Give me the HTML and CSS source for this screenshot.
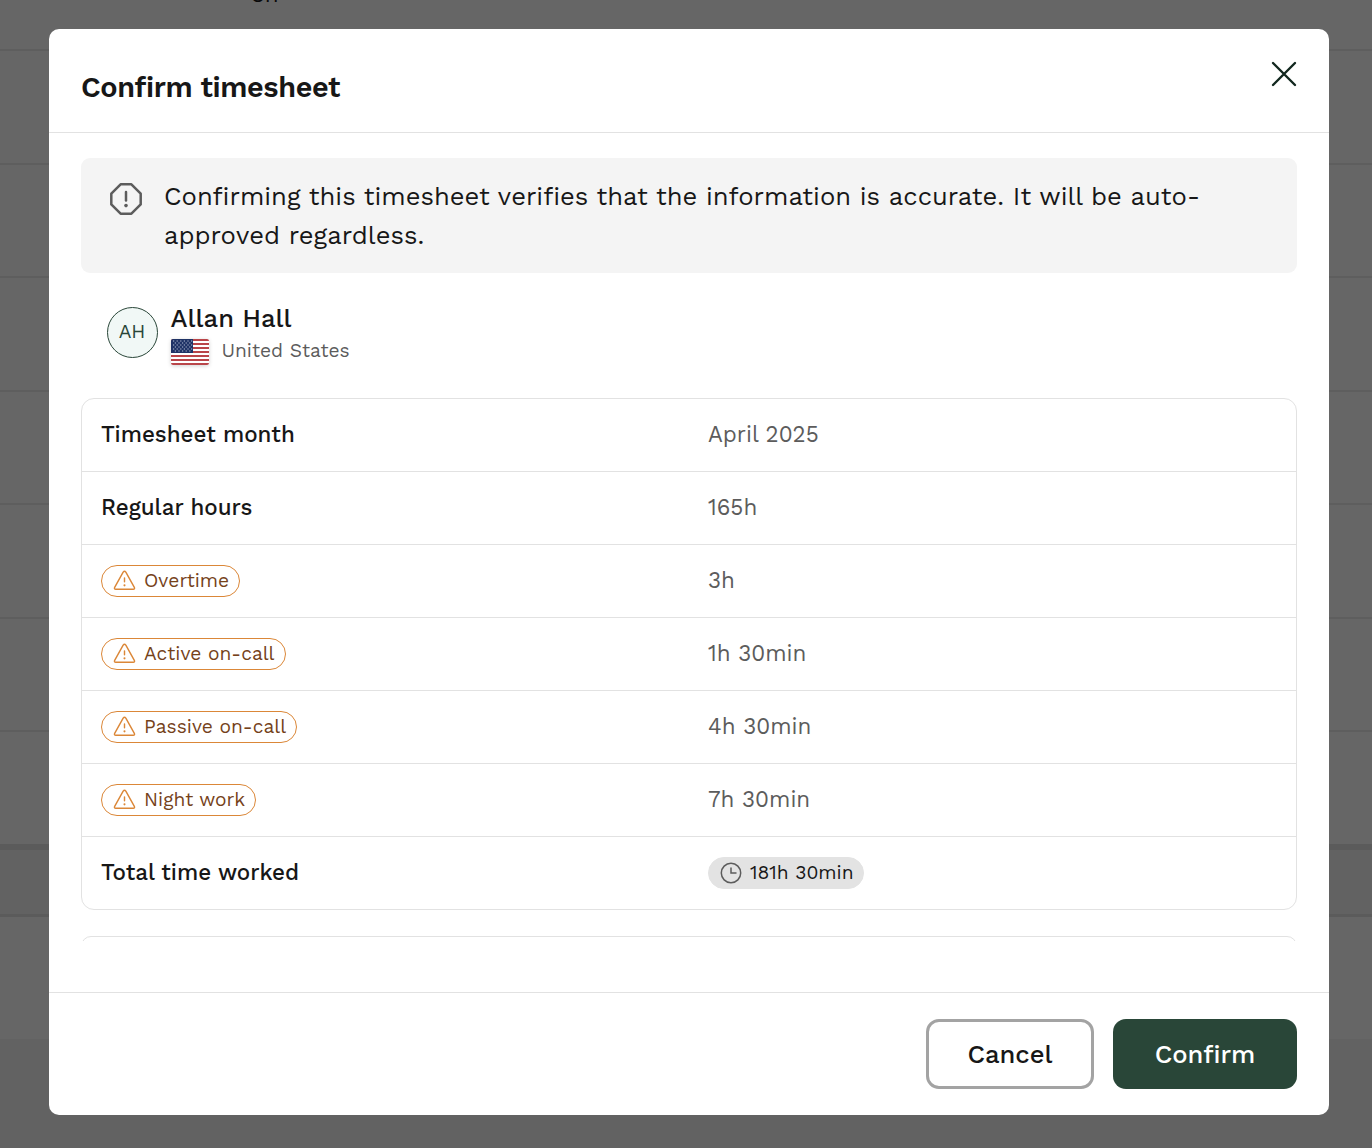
FILE: index.html
```html
<!DOCTYPE html>
<html lang="en">
<head>
    <meta charset="UTF-8">
    <meta name="viewport" content="width=device-width, initial-scale=1.0">
    <title>Confirm timesheet</title>
    <link rel="stylesheet" href="styles.css">
</head>
<body>
    <svg width="0" height="0" class="sprite" aria-hidden="true">
        <symbol id="warning" viewBox="0 0 24 22">
            <path d="M10.6 2.2 L1.7 18.1 Q0.9 20.2 2.8 20.2 H21.2 Q23.1 20.2 22.3 18.1 L13.4 2.2 Q12 .4 10.6 2.2 Z" fill="none" stroke="currentColor" stroke-width="1.5" stroke-linejoin="round"/>
            <path d="M12 8.3 V12.4" stroke="currentColor" stroke-width="1.5" stroke-linecap="round"/>
            <circle cx="12" cy="16.1" r="1.1" fill="currentColor"/>
        </symbol>
    </svg>

    <div class="page">
        <div class="page-row first"><span>8h</span></div>
        <div class="page-row"></div>
        <div class="page-row"></div>
        <div class="page-row"></div>
        <div class="page-row"></div>
        <div class="page-row"></div>
        <div class="page-row"></div>
        <div class="page-row last"></div>
        <div class="page-total"></div>
        <div class="page-end"></div>
    </div>

    <div class="overlay">
        <div class="modal" role="dialog" aria-labelledby="modalTitle">
            <div class="modal-header">
                <h1 id="modalTitle">Confirm timesheet</h1>
                <button class="close-btn" aria-label="Close">
                    <svg width="26" height="26" viewBox="0 0 26 26"><path d="M2 2 L24 24 M24 2 L2 24" stroke="#12271f" stroke-width="2.4" stroke-linecap="round"/></svg>
                </button>
            </div>

            <div class="modal-body">
                <div class="notice">
                    <svg width="32" height="32" viewBox="0 0 32 32" fill="none" stroke="#5c5c5c" stroke-width="2.5">
                        <path d="M10.6 1.3 H21.4 L30.7 10.6 V21.4 L21.4 30.7 H10.6 L1.3 21.4 V10.6 Z" stroke-linejoin="round"/>
                        <path d="M16 9 V17.5" stroke-linecap="round"/>
                        <circle cx="16" cy="22.6" r="1.8" fill="#5c5c5c" stroke="none"/>
                    </svg>
                    <p>Confirming this timesheet verifies that the information is accurate. It will be auto-<br>approved regardless.</p>
                </div>

                <div class="person">
                    <div class="avatar">AH</div>
                    <div>
                        <div class="name">Allan Hall</div>
                        <div class="country">
                            <svg class="flag" width="38" height="26" viewBox="0 0 38 26">
                                <rect width="38" height="26" fill="#fff"/>
                                <path d="M0 1H38M0 5H38M0 9H38M0 13H38M0 17H38M0 21H38M0 25H38" stroke="#b94549" stroke-width="2"/>
                                <rect width="22" height="14" fill="#1f3366"/>
                                <path d="M2 2H22M2 6H22M2 10H22" stroke="#b6bfd3" stroke-width="1.2" stroke-dasharray="1.2 2.4"/>
                                <path d="M3.8 4H21M3.8 8H21M3.8 12H21" stroke="#b6bfd3" stroke-width="1.2" stroke-dasharray="1.2 2.4"/>
                            </svg>
                            <span>United States</span>
                        </div>
                    </div>
                </div>

                <div class="table">
                    <div class="row">
                        <div class="label">Timesheet month</div>
                        <div class="value">April 2025</div>
                    </div>
                    <div class="row">
                        <div class="label">Regular hours</div>
                        <div class="value">165h</div>
                    </div>
                    <div class="row">
                        <div><span class="pill"><svg width="23" height="21"><use href="#warning"/></svg><span>Overtime</span></span></div>
                        <div class="value">3h</div>
                    </div>
                    <div class="row">
                        <div><span class="pill"><svg width="23" height="21"><use href="#warning"/></svg><span>Active on-call</span></span></div>
                        <div class="value">1h 30min</div>
                    </div>
                    <div class="row">
                        <div><span class="pill"><svg width="23" height="21"><use href="#warning"/></svg><span>Passive on-call</span></span></div>
                        <div class="value">4h 30min</div>
                    </div>
                    <div class="row">
                        <div><span class="pill"><svg width="23" height="21"><use href="#warning"/></svg><span>Night work</span></span></div>
                        <div class="value">7h 30min</div>
                    </div>
                    <div class="row">
                        <div class="label">Total time worked</div>
                        <div><span class="pill total"><svg width="22" height="22" viewBox="0 0 22 22" fill="none" stroke="#5c5c5c" stroke-width="1.5"><circle cx="11" cy="11" r="9.7"/><path d="M11 5.5 V11 H16.5"/></svg><span>181h 30min</span></span></div>
                    </div>
                </div>

                <div class="table next"></div>
            </div>

            <div class="modal-footer">
                <button class="btn cancel">Cancel</button>
                <button class="btn confirm">Confirm</button>
            </div>
        </div>
    </div>
</body>
</html>
```
FILE: styles.css
```css
* { margin: 0; padding: 0; box-sizing: border-box; }
body {
    font-family: 'Work Sans', 'Inter', sans-serif;
    background-color: #fff;
    color: #171717;
    height: 1148px;
    overflow: hidden;
}
.sprite {
    position: absolute;
}
/* timesheet list under the dialog */
.page {
    height: 1148px;
    display: flex;
    flex-direction: column;
}
.page-row {
    height: 113.5px;
    border-bottom: 2px solid #ebebeb;
}
.page-row.first {
    height: 51px;
    padding-left: 251px;
    font-size: 22.4px;
    line-height: 26px;
}
.page-row.first span {
    display: block;
    margin-top: -19px;
}
.page-row.last {
    height: 118px;
    border-bottom: 6px solid #e3e3e3;
}
.page-total {
    height: 67px;
    background-color: #f4f4f4;
    border-bottom: 3px solid #e3e3e3;
}
.page-end {
    margin-top: 122px;
    flex: 1;
    background-color: #f4f4f4;
}
.overlay {
    position: absolute;
    inset: 0;
    padding: 29px 43px 33px 49px;
    background-color: rgba(0, 0, 0, 0.6);
}
.modal {
    height: 1086px;
    display: flex;
    flex-direction: column;
    background-color: #fff;
    border-radius: 10px;
}
.modal-header {
    height: 104px;
    padding: 0 32px;
    display: flex;
    justify-content: space-between;
    border-bottom: 1px solid #e2e2e2;
}
h1 {
    font-size: 28.8px;
    line-height: 32px;
    font-weight: 600;
    letter-spacing: -0.36px;
    padding-top: 42px;
}
.close-btn {
    height: 26px;
    margin-top: 32px;
    border: none;
    background: none;
    cursor: pointer;
}
svg {
    display: block;
    flex-shrink: 0;
}
.modal-body {
    height: 808px;
    margin-bottom: 51px;
    padding: 25px 32px 0;
    overflow: hidden;
}
.notice {
    height: 115px;
    padding: 19px 29px;
    display: flex;
    gap: 22px;
    background-color: #f4f4f4;
    border-radius: 9px;
}
.notice svg {
    margin-top: 6px;
}
.notice p {
    font-size: 25.6px;
    line-height: 39px;
    white-space: nowrap;
}
.person {
    height: 125px;
    padding: 28px 26px 0;
    display: flex;
    gap: 12.5px;
}
.avatar {
    width: 51px;
    height: 51px;
    margin-top: 6px;
    padding: 0 1px 2px 0;
    display: flex;
    justify-content: center;
    align-items: center;
    border: 1px solid #294638;
    border-radius: 50%;
    background-color: #f1f8f6;
    color: #294638;
    font-size: 19.2px;
}
.name {
    font-size: 25.6px;
    line-height: 34px;
    font-weight: 500;
}
.country {
    display: flex;
    gap: 13px;
    margin-top: 4px;
    font-size: 19.2px;
    line-height: 24px;
    color: #5c5c5c;
}
.flag {
    border-radius: 2px;
    box-shadow: 0 1px 4px rgba(0, 0, 0, 0.18);
}
.table {
    border: 1px solid #e2e2e2;
    border-radius: 13px;
}
.table.next {
    height: 60px;
    margin-top: 26px;
    border-radius: 10px;
}
.row {
    height: 73px;
    padding-left: 19px;
    display: grid;
    grid-template-columns: 607px 1fr;
    align-items: center;
    border-bottom: 1px solid #e2e2e2;
}
.row:last-child {
    height: 72px;
    border-bottom: none;
}
.label {
    padding-bottom: 2px;
    font-size: 22.4px;
    font-weight: 500;
}
.value {
    padding-bottom: 2px;
    font-size: 22.4px;
    color: #5c5c5c;
}
.pill {
    height: 32px;
    padding: 0 10px 0 11px;
    display: inline-flex;
    align-items: center;
    gap: 8px;
    vertical-align: middle;
    border: 1px solid #db8738;
    border-radius: 16px;
    color: #75421a;
    font-size: 19.2px;
    font-weight: 450;
}
.pill span {
    padding-bottom: 2px;
}
.pill svg {
    color: #db8738;
    margin-bottom: 1px;
}
.pill.total {
    padding-right: 9px;
    border-color: #e3e3e3;
    background-color: #e3e3e3;
    color: #171717;
}
.modal-footer {
    height: 123px;
    padding: 26px 32px 0;
    display: flex;
    justify-content: flex-end;
    gap: 19px;
    border-top: 1px solid #e2e2e2;
}
.btn {
    height: 70px;
    border-radius: 13px;
    font-family: inherit;
    font-size: 25.6px;
    font-weight: 500;
    cursor: pointer;
}
.cancel {
    width: 168px;
    border: 3px solid #a3a3a3;
    background-color: #fff;
    color: #171717;
}
.confirm {
    width: 184px;
    border: none;
    background-color: #294638;
    color: #fff;
}
```
